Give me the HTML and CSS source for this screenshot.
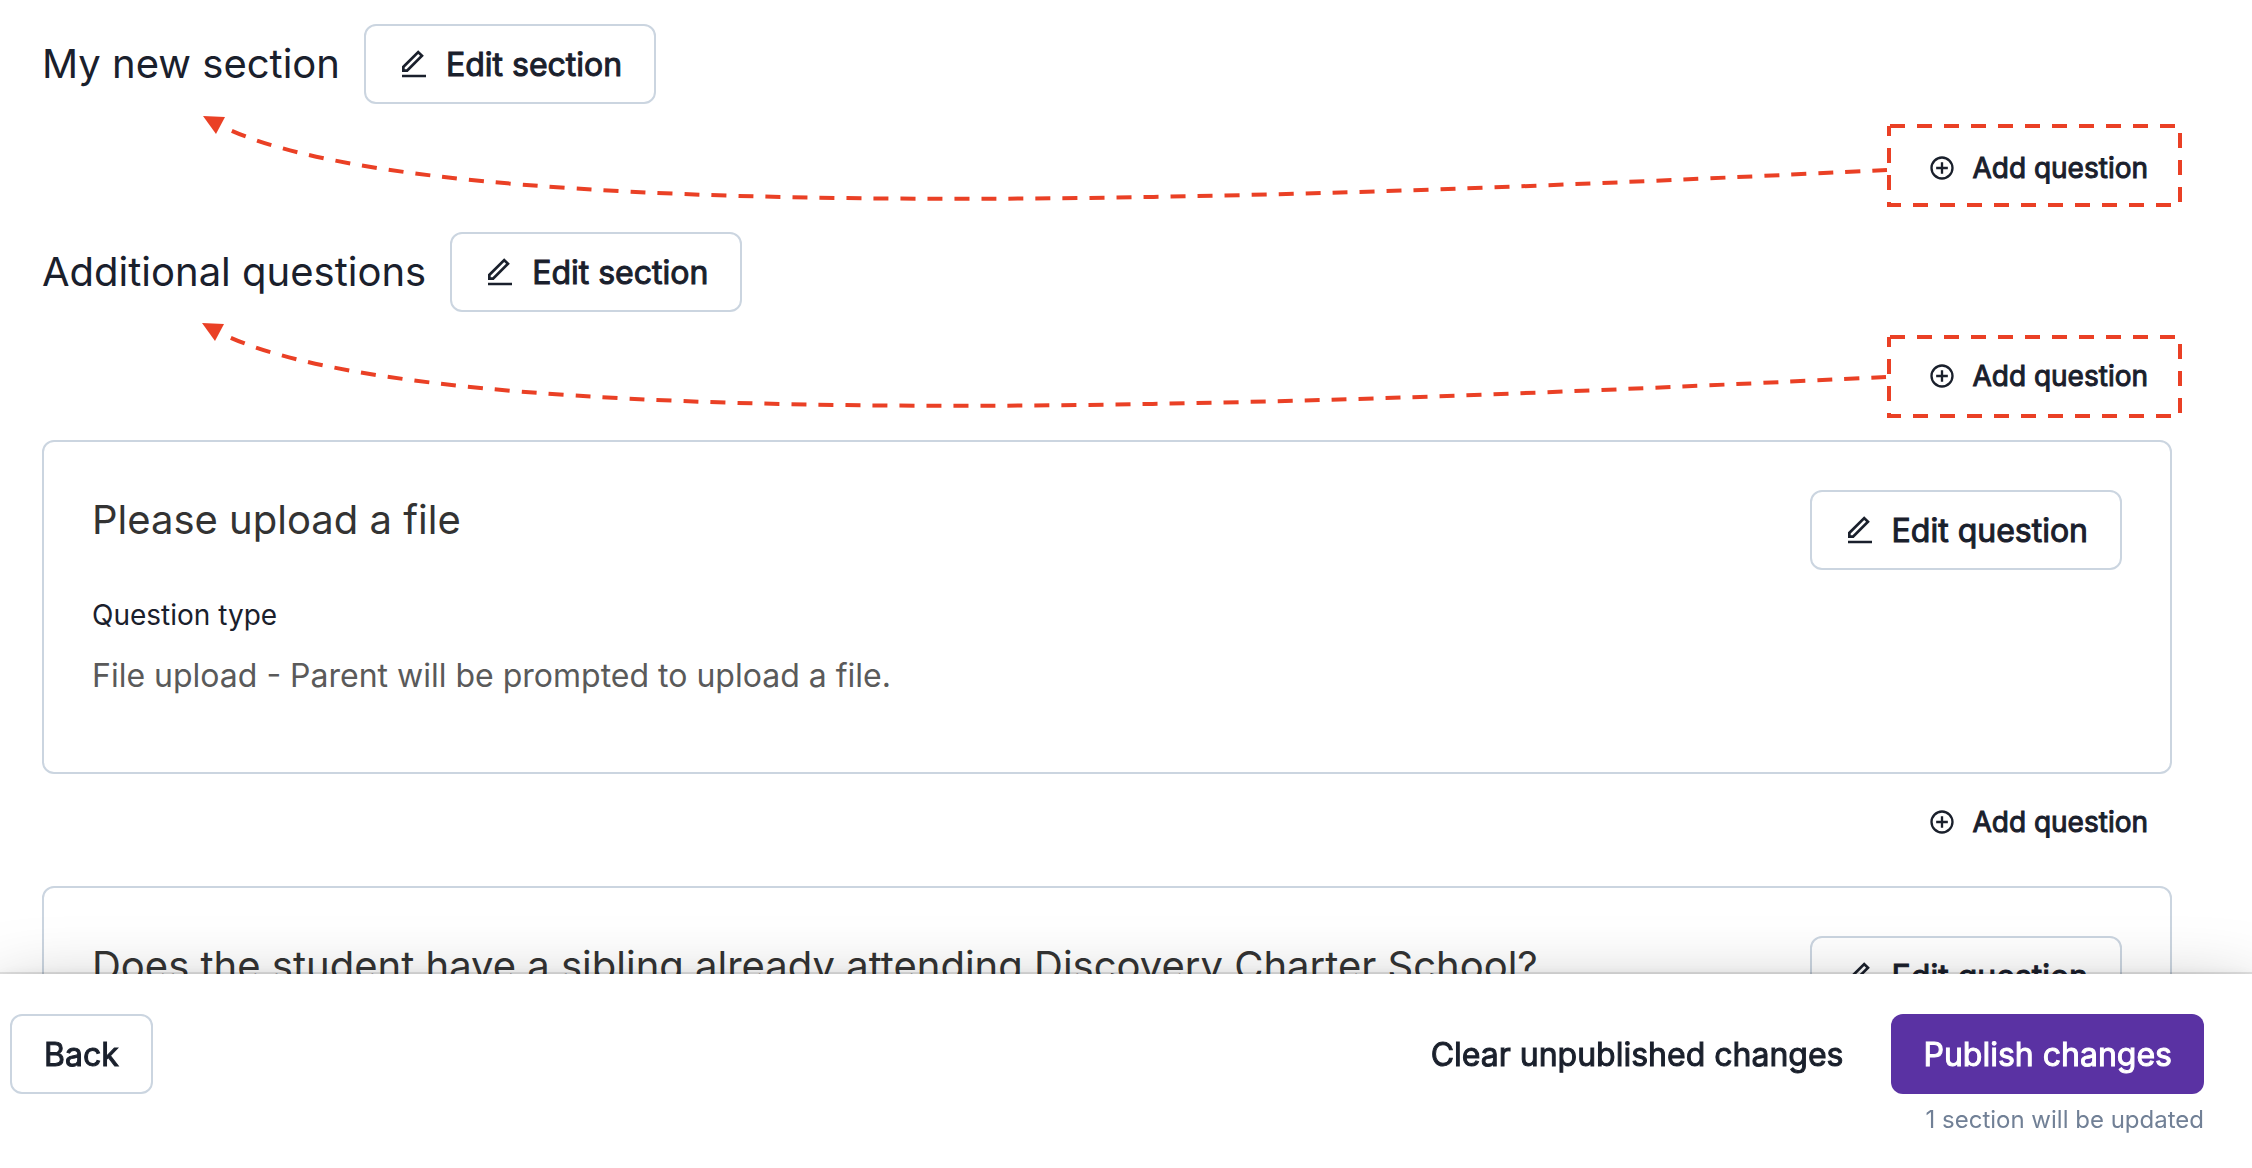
FILE: index.html
```html
<!DOCTYPE html>
<html lang="en">
<head>
    <meta charset="UTF-8">
    <meta name="viewport" content="width=device-width, initial-scale=1.0">
    <title>Edit form</title>
    <link rel="stylesheet" href="styles.css">
</head>
<body>
    <!-- Shared icons -->
    <svg class="icon-defs" aria-hidden="true">
        <symbol id="icon-edit" viewBox="0 0 24 24">
            <path d="M6.414 16L16.556 5.858l-1.414-1.414L5 14.586V16h1.414zm.829 2H3v-4.243L15.142 1.615l4.243 4.243L7.243 18zM3 20h18v2H3v-2z"/>
        </symbol>
        <symbol id="icon-add" viewBox="0 0 24 24">
            <path d="M11 11V7h2v4h4v2h-4v4h-2v-4H7v-2h4zm1 11C6.477 22 2 17.523 2 12S6.477 2 12 2s10 4.477 10 10-4.477 10-10 10zm0-2a8 8 0 1 0 0-16 8 8 0 0 0 0 16z"/>
        </symbol>
    </svg>

    <main class="container">
        <div class="section-header">
            <h2>My new section</h2>
            <button type="button" class="btn btn-outline"><svg class="icon"><use href="#icon-edit"/></svg>Edit section</button>
        </div>
        <div class="add-row">
            <button type="button" class="btn btn-small"><svg class="icon"><use href="#icon-add"/></svg>Add question</button>
            <svg class="note" viewBox="0 0 2130 128" aria-hidden="true">
                <path class="note-line" stroke-dashoffset="-1" d="M1847 22H2138V101H1847Z"/>
                <path class="note-line" d="M1845 66C1388 88 428 134 188 26"/>
                <path class="note-head" d="M161 12L183 13L174 30Z"/>
            </svg>
        </div>

        <div class="section-header">
            <h2>Additional questions</h2>
            <button type="button" class="btn btn-outline"><svg class="icon"><use href="#icon-edit"/></svg>Edit section</button>
        </div>
        <div class="add-row">
            <button type="button" class="btn btn-small"><svg class="icon"><use href="#icon-add"/></svg>Add question</button>
            <svg class="note" viewBox="0 0 2130 128" aria-hidden="true">
                <path class="note-line" stroke-dashoffset="-1" d="M1847 25H2138V104H1847Z"/>
                <path class="note-line" d="M1844 65C1387 87 427 133 187 25"/>
                <path class="note-head" d="M160 11L182 12L173 29Z"/>
            </svg>
        </div>

        <div class="card">
            <div class="card-body">
                <h3>Please upload a file</h3>
                <h4>Question type</h4>
                <p>File upload - Parent will be prompted to upload a file.</p>
            </div>
            <button type="button" class="btn btn-outline"><svg class="icon"><use href="#icon-edit"/></svg>Edit question</button>
        </div>
        <div class="add-row add-row-after">
            <button type="button" class="btn btn-small"><svg class="icon"><use href="#icon-add"/></svg>Add question</button>
        </div>

        <div class="card">
            <div class="card-body">
                <h3>Does the student have a sibling already attending Discovery Charter School?</h3>
            </div>
            <button type="button" class="btn btn-outline"><svg class="icon"><use href="#icon-edit"/></svg>Edit question</button>
        </div>
    </main>

    <footer class="footer">
        <button type="button" class="btn btn-outline">Back</button>
        <div class="footer-actions">
            <button type="button" class="btn">Clear unpublished changes</button>
            <div class="publish">
                <button type="button" class="btn btn-primary">Publish changes</button>
                <p>1 section will be updated</p>
            </div>
        </div>
    </footer>
</body>
</html>
```
FILE: styles.css
```css
* {
    box-sizing: border-box;
}

html {
    height: 100%;
    overflow: hidden;
}

body {
    height: 100%;
    margin: 0;
    overflow: hidden;
    font-family: Inter, "Liberation Sans", sans-serif;
    font-size: 32px;
    line-height: 48px;
    color: #1a202c;
    background-color: #fff;
}

h2, h3, h4, p {
    margin: 0;
    font-weight: 400;
}

h2, h3 {
    font-size: 40px;
    line-height: 60px;
}

.icon-defs {
    position: absolute;
    width: 0;
    height: 0;
}

.container {
    padding: 24px 80px 0 42px;
}

/* Buttons */
.btn {
    display: inline-flex;
    flex-shrink: 0;
    align-items: center;
    justify-content: center;
    gap: 16px;
    height: 80px;
    padding: 0 32px;
    border: none;
    border-radius: 12px;
    background: none;
    color: #1a202c;
    font-family: inherit;
    font-size: 32px;
    font-weight: 400;
    -webkit-text-stroke: 1px currentColor;
    white-space: nowrap;
    cursor: pointer;
}

.btn-outline {
    border: 2px solid #cbd5e0;
}

.btn-small {
    height: 64px;
    padding: 0 24px;
    font-size: 28px;
}

.btn-primary {
    background-color: #5a32a3;
    color: #fff;
}

.icon {
    width: 1em;
    height: 1em;
    fill: currentColor;
}

/* Sections */
.section-header {
    display: flex;
    align-items: center;
    gap: 24px;
}

.add-row {
    position: relative;
    display: flex;
    justify-content: flex-end;
    padding: 32px 0;
}

.add-row-after {
    padding-top: 16px;
}

/* Dashed arrow from the add button to its section title */
.note {
    position: absolute;
    top: 0;
    left: 0;
    width: 100%;
    overflow: visible;
    pointer-events: none;
}

.note-line {
    fill: none;
    stroke: #ea4025;
    stroke-width: 4;
    stroke-dasharray: 15 12;
}

.note-head {
    fill: #ea4025;
}

/* Question cards */
.card {
    display: flex;
    align-items: flex-start;
    justify-content: space-between;
    padding: 48px;
    border: 2px solid #cbd5e0;
    border-radius: 12px;
}

.card-body h3 {
    color: #333;
}

.card-body h4 {
    margin-top: 44px;
    font-size: 28px;
    line-height: 42px;
}

.card-body p {
    margin: 16px 0 24px;
    color: #5a5a5a;
}

/* Bottom bar */
.footer {
    position: fixed;
    right: 0;
    bottom: 0;
    left: 0;
    display: flex;
    align-items: flex-start;
    justify-content: space-between;
    padding: 40px 48px 30px 10px;
    background-color: #fff;
    box-shadow: 0 0 0 2px rgba(0, 0, 0, 0.1), 0 10px 20px rgba(0, 0, 0, 0.2), 0 30px 80px rgba(0, 0, 0, 0.4);
}

.footer-actions {
    display: flex;
    align-items: flex-start;
    gap: 16px;
}

.publish p {
    margin-top: 8px;
    font-size: 24px;
    line-height: 36px;
    text-align: right;
    color: #718096;
}
```
